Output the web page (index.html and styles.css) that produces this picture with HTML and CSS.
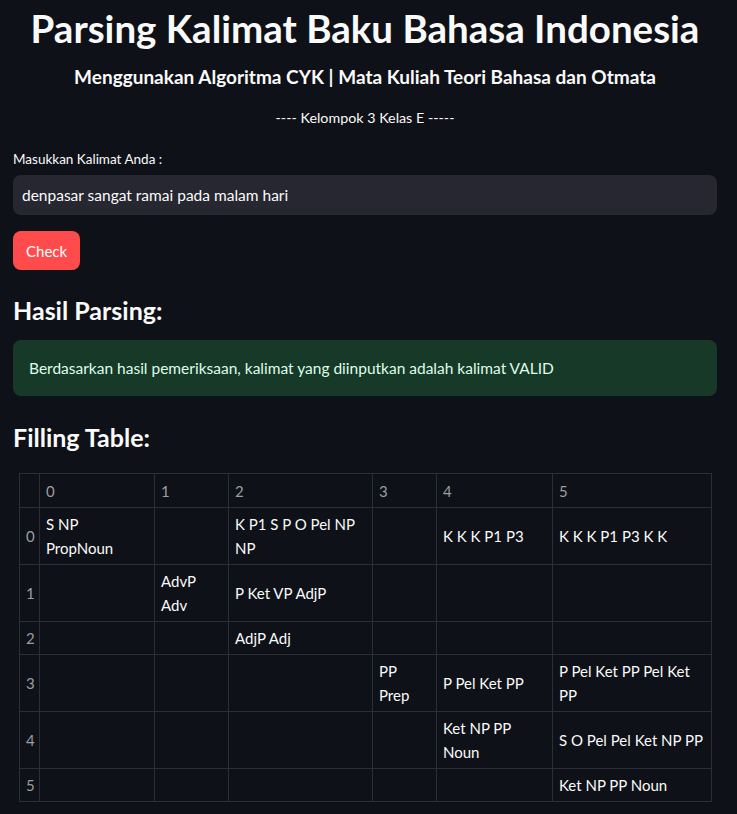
FILE: index.html
```html
<!DOCTYPE html>
<html>
<head>
<meta charset="utf-8">
<link rel="stylesheet" href="styles.css">
</head>
<body>
<main class="app">
  <h1 class="title">Parsing Kalimat Baku Bahasa Indonesia</h1>
  <h3 class="subtitle">Menggunakan Algoritma CYK | Mata Kuliah Teori Bahasa dan Otmata</h3>
  <p class="group">---- Kelompok 3 Kelas E -----</p>

  <label class="label">Masukkan Kalimat Anda :</label>
  <div class="input">denpasar sangat ramai pada malam hari</div>
  <button class="btn">Check</button>

  <h2 class="section">Hasil Parsing:</h2>
  <div class="alert">Berdasarkan hasil pemeriksaan, kalimat yang diinputkan adalah kalimat VALID</div>

  <h2 class="section section-table">Filling Table:</h2>
  <div class="table-wrap">
    <table class="tbl">
      <colgroup>
        <col class="c-idx"><col class="c0"><col class="c1"><col class="c2"><col class="c3"><col class="c4"><col class="c5">
      </colgroup>
      <thead>
        <tr><th></th><th>0</th><th>1</th><th>2</th><th>3</th><th>4</th><th>5</th></tr>
      </thead>
      <tbody>
        <tr><th>0</th><td>S NP PropNoun</td><td></td><td>K P1 S P O Pel NP NP</td><td></td><td>K K K P1 P3</td><td>K K K P1 P3 K K</td></tr>
        <tr><th>1</th><td></td><td>AdvP Adv</td><td>P Ket VP AdjP</td><td></td><td></td><td></td></tr>
        <tr><th>2</th><td></td><td></td><td>AdjP Adj</td><td></td><td></td><td></td></tr>
        <tr><th>3</th><td></td><td></td><td></td><td>PP Prep</td><td>P Pel Ket PP</td><td>P Pel Ket PP Pel Ket PP</td></tr>
        <tr><th>4</th><td></td><td></td><td></td><td></td><td>Ket NP PP Noun</td><td>S O Pel Pel Ket NP PP</td></tr>
        <tr><th>5</th><td></td><td></td><td></td><td></td><td></td><td>Ket NP PP Noun</td></tr>
      </tbody>
    </table>
  </div>
</main>
</body>
</html>
```
FILE: styles.css
```css
html, body {
  margin: 0;
  padding: 0;
  background: #0e1117;
}
body {
  font-family: "Lato", "Liberation Sans", sans-serif;
  color: #fafafa;
}
.app {
  padding: 0 20px 0 13px;
  display: flex;
  flex-direction: column;
}
.title {
  margin: 0;
  padding-top: 4px;
  text-align: center;
  font-size: 38.5px;
  font-weight: 700;
  line-height: 48px;
}
.subtitle {
  margin: 0;
  padding-top: 11px;
  text-align: center;
  font-size: 19px;
  font-weight: 700;
  line-height: 28px;
}
.group {
  margin: 0;
  padding-top: 16px;
  text-align: center;
  font-size: 14.3px;
  line-height: 22px;
}
.label {
  margin-top: 20px;
  font-size: 13.5px;
  line-height: 20px;
}
.input {
  margin-top: 6px;
  height: 40px;
  box-sizing: border-box;
  background: #262730;
  border-radius: 8px;
  padding: 0 9px;
  display: flex;
  align-items: center;
  font-size: 15.5px;
  color: #fafafa;
}
.btn {
  align-self: flex-start;
  margin-top: 16px;
  height: 39px;
  padding: 0 13px;
  border: none;
  border-radius: 8px;
  background: #ff4b4b;
  color: #fff;
  font-family: inherit;
  font-size: 15px;
}
.section {
  margin: 0;
  padding-top: 23px;
  font-size: 25px;
  font-weight: 700;
  line-height: 34px;
}
.alert {
  margin-top: 13px;
  height: 56px;
  box-sizing: border-box;
  background: #173928;
  border-radius: 8px;
  padding: 0 16px;
  display: flex;
  align-items: center;
  font-size: 15.5px;
  color: #dffde9;
}
.section-table {
  padding-top: 24px;
}
.table-wrap {
  padding: 19px 6px 0 6px;
}
.tbl {
  border-collapse: collapse;
  width: 692px;
  table-layout: fixed;
  font-size: 15px;
  line-height: 24px;
}
.tbl th, .tbl td {
  border: 1px solid #2c2f36;
  padding: 4px 6px;
  text-align: left;
  vertical-align: middle;
  font-weight: 400;
}
.tbl thead th {
  height: 25px;
}
.tbl th {
  color: #9c9da2;
}
.tbl td {
  color: #fafafa;
}
.c-idx { width: 20px; }
.c0 { width: 115px; }
.c1 { width: 74px; }
.c2 { width: 144px; }
.c3 { width: 64px; }
.c4 { width: 116px; }
.c5 { width: 159px; }
```
